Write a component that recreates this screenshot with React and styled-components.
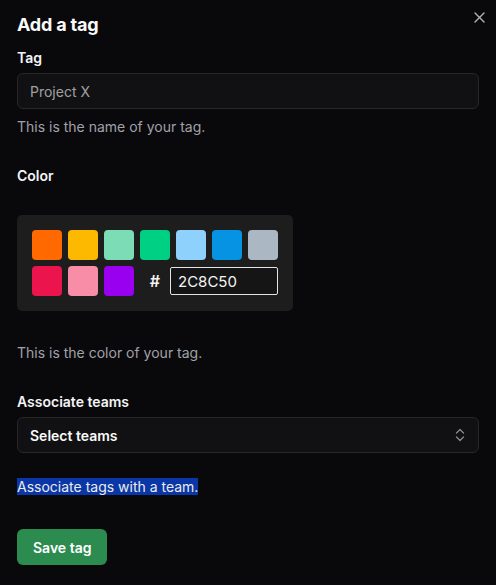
import React from "react";
import styled, { createGlobalStyle } from "styled-components";

const GlobalStyle = createGlobalStyle`
  * { box-sizing: border-box; }
  html, body { margin: 0; padding: 0; background: #09090b; }
  body {
    font-family: Inter, "Noto Sans", "Liberation Sans", sans-serif;
    color: #fafafa;
    -webkit-font-smoothing: antialiased;
  }
`;

const Dialog = styled.div`
  position: relative;
  width: 496px;
  min-height: 585px;
  background: #09090b;
  padding: 11px 17px 20px 17px;
  display: flex;
  flex-direction: column;
`;

const CloseButton = styled.button`
  position: absolute;
  top: 10px;
  right: 10px;
  width: 14px;
  height: 14px;
  padding: 0;
  border: none;
  background: transparent;
  color: #b4b4b8;
  display: flex;
  align-items: center;
  justify-content: center;
  cursor: pointer;
`;

const Title = styled.h2`
  margin: 0;
  font-size: 18px;
  line-height: 28px;
  font-weight: 700;
  letter-spacing: -0.2px;
  color: #fafafa;
`;

const Form = styled.div`
  display: flex;
  flex-direction: column;
`;

const Field = styled.div`
  display: flex;
  flex-direction: column;
  margin-top: ${(p) => p.$mt}px;
`;

const Label = styled.label`
  font-size: 14px;
  line-height: 20px;
  font-weight: 600;
  color: #f4f4f5;
`;

const TextInput = styled.div`
  margin-top: ${(p) => p.$mt || 5}px;
  height: 36px;
  border: 1px solid #27272a;
  border-radius: 6px;
  background: #111113;
  display: flex;
  align-items: center;
  justify-content: space-between;
  padding: 0 12px;
  font-size: 14px;
  color: ${(p) => (p.$strong ? "#fafafa" : "#a1a1a1")};
  font-weight: ${(p) => (p.$strong ? 600 : 400)};
`;

const Help = styled.p`
  margin: ${(p) => p.$mt}px 0 0 0;
  font-size: 14px;
  line-height: 20px;
  color: #a1a1aa;
`;

const Highlight = styled.span`
  background: #0a37a7;
  color: #ececec;
`;

const Picker = styled.div`
  margin-top: 29px;
  width: 276px;
  padding: 15px;
  background: #1d1d1d;
  border-radius: 5px;
  display: grid;
  grid-template-columns: repeat(7, 30px);
  grid-auto-rows: 30px;
  gap: 6px;
`;

const Swatch = styled.div`
  width: 30px;
  height: 30px;
  border-radius: 4px;
  background: ${(p) => p.$color};
  cursor: pointer;
`;

const HexWrap = styled.div`
  grid-column: span 4;
  display: flex;
  align-items: center;
`;

const Hash = styled.span`
  width: 30px;
  text-align: center;
  font-size: 16px;
  font-weight: 600;
  color: #f4f4f5;
`;

const HexInput = styled.div`
  flex: 1;
  height: 28px;
  border: 1px solid #e4e4e7;
  border-radius: 2px;
  background: #151515;
  display: flex;
  align-items: center;
  padding: 0 7px;
  font-size: 15px;
  color: #f4f4f5;
`;

const SaveButton = styled.button`
  margin-top: 32px;
  align-self: flex-start;
  height: 36px;
  padding: 0 16px;
  border: none;
  border-radius: 6px;
  background: #2c8c50;
  color: #ffffff;
  font-family: inherit;
  font-size: 14px;
  font-weight: 600;
  cursor: pointer;
`;

const colors = [
  "#FF6900",
  "#FCB900",
  "#7BDCB5",
  "#00D084",
  "#8ED1FC",
  "#0693E3",
  "#ABB8C3",
  "#EB144C",
  "#F78DA7",
  "#9900EF",
];

export default function App() {
  return (
    <>
      <GlobalStyle />
      <Dialog>
        <CloseButton aria-label="Close">
          <svg width="11" height="11" viewBox="0 0 11 11" fill="none">
            <path d="M1 1L10 10M10 1L1 10" stroke="currentColor" strokeWidth="1.4" strokeLinecap="round" />
          </svg>
        </CloseButton>
        <Title>Add a tag</Title>
        <Form>
          <Field $mt={9}>
            <Label>Tag</Label>
            <TextInput>Project X</TextInput>
            <Help $mt={8}>This is the name of your tag.</Help>
          </Field>
          <Field $mt={29}>
            <Label>Color</Label>
            <Picker>
              {colors.map((c) => (
                <Swatch key={c} $color={c} />
              ))}
              <HexWrap>
                <Hash>#</Hash>
                <HexInput>2C8C50</HexInput>
              </HexWrap>
            </Picker>
            <Help $mt={32}>This is the color of your tag.</Help>
          </Field>
          <Field $mt={29}>
            <Label>Associate teams</Label>
            <TextInput $strong>
              Select teams
              <svg width="12" height="14" viewBox="0 0 12 14" fill="none">
                <path d="M2.5 5L6 1.5L9.5 5M2.5 9L6 12.5L9.5 9" stroke="#8a8a8e" strokeWidth="1.3" strokeLinecap="round" strokeLinejoin="round" />
              </svg>
            </TextInput>
            <Help $mt={24}>
              <Highlight>Associate tags with a team.</Highlight>
            </Help>
          </Field>
          <SaveButton>Save tag</SaveButton>
        </Form>
      </Dialog>
    </>
  );
}
